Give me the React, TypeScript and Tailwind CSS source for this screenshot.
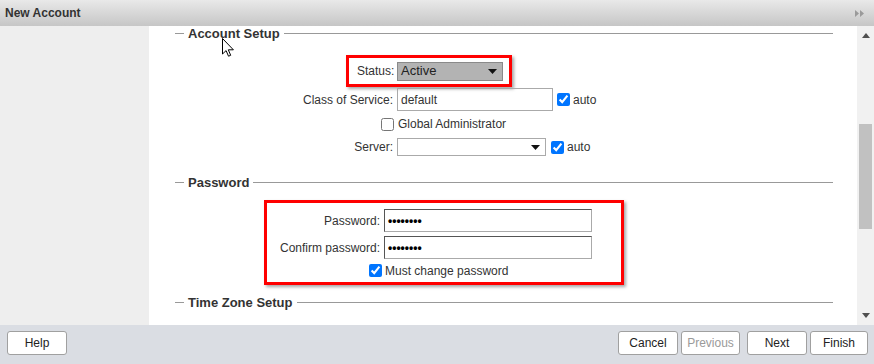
import React from "react";

const font = { fontFamily: '"Liberation Sans", Arial, sans-serif' };

const Legend = ({ title }: { title: string }) => (
  <div className="flex items-center h-[14px] pl-[26px] pr-[24px]">
    <div className="w-[9px] h-px bg-[#999]" />
    <span className="px-[4px] text-[13px] font-bold text-[#333] leading-none">{title}</span>
    <div className="flex-1 h-px bg-[#999]" />
  </div>
);

const Caret = () => (
  <svg width="9" height="5" viewBox="0 0 9 5" className="shrink-0">
    <path d="M0 0h9L4.5 5z" fill="#111" />
  </svg>
);

const Check = ({ checked = false }: { checked?: boolean }) => (
  <input
    type="checkbox"
    defaultChecked={checked}
    className="m-0 w-[13px] h-[13px] accent-[#0075ff] shrink-0"
  />
);

const Btn = ({ label, w, disabled = false }: { label: string; w: string; disabled?: boolean }) => (
  <button
    className={`h-[24px] ${w} bg-white border border-[#a0a0a0] rounded-[3px] text-[12px] ${
      disabled ? "text-[#9a9a9a]" : "text-[#222]"
    }`}
  >
    {label}
  </button>
);

export default function App() {
  return (
    <div style={font} className="w-[874px] h-[364px] flex flex-col overflow-hidden text-[12px] text-[#333]">
      {/* title bar */}
      <div className="h-[26px] flex items-center justify-between pl-[5px] pr-[9px] bg-gradient-to-b from-[#e9e9e9] to-[#c6c6c6]">
        <span className="text-[12px] font-bold text-[#333]">New Account</span>
        <svg width="10" height="7" viewBox="0 0 10 7">
          <path d="M0 0l4 3.5L0 7zM5 0l4 3.5L5 7z" fill="#9a9a9a" />
        </svg>
      </div>

      <div className="flex h-[299px]">
        <div className="w-[149px] bg-[#eeeeee]" />

        <div className="relative w-[708px] bg-white overflow-hidden">
          <Legend title="Account Setup" />

          {/* status */}
          <div className="flex mt-[15px]">
            <div className="w-[197px]" />
            <div className="flex items-center h-[32px] w-[166px] border-[3px] border-[#ff0000] pl-[8px] shadow-[2px_2px_3px_rgba(0,0,0,0.35)]">
              <span className="w-[36px] text-right">Status:</span>
              <div className="ml-[4px] w-[106px] h-[19px] bg-[#b3b3b3] border border-[#8a8a8a] flex items-center justify-between pl-[3px] pr-[5px]">
                <span className="text-[#222] text-[13px]">Active</span>
                <Caret />
              </div>
            </div>
          </div>

          {/* class of service */}
          <div className="flex items-center mt-[1px] h-[23px]">
            <span className="w-[244px] text-right">Class of Service:</span>
            <div className="ml-[4px] w-[156px] h-[23px] border border-[#aaa] flex items-center pl-[3px] text-[#333]">
              default
            </div>
            <div className="ml-[4px] flex items-center gap-[3px]">
              <Check checked />
              <span>auto</span>
            </div>
          </div>

          {/* global admin */}
          <div className="flex items-center mt-[3px] h-[20px]">
            <div className="w-[232px]" />
            <Check />
            <span className="ml-[4px]">Global Administrator</span>
          </div>

          {/* server */}
          <div className="flex items-center mt-[4px] h-[18px]">
            <span className="w-[244px] text-right">Server:</span>
            <div className="ml-[4px] w-[149px] h-[18px] border border-[#aaa] flex items-center justify-end pr-[5px]">
              <Caret />
            </div>
            <div className="ml-[5px] flex items-center gap-[3px]">
              <Check checked />
              <span>auto</span>
            </div>
          </div>

          <div className="mt-[19px]">
            <Legend title="Password" />
          </div>

          {/* password box */}
          <div className="flex mt-[11px]">
            <div className="w-[115px]" />
            <div className="w-[360px] h-[85px] border-[3px] border-[#ff0000] pt-[6px] shadow-[2px_2px_3px_rgba(0,0,0,0.35)]">
              <div className="flex items-center h-[23px]">
                <span className="w-[113px] text-right">Password:</span>
                <div className="ml-[4px] w-[208px] h-[23px] border border-[#aaa] border-t-[#555] border-l-[#555] flex items-center pl-[3px] text-[12px] font-bold text-black">
                  ••••••••
                </div>
              </div>
              <div className="flex items-center h-[23px] mt-[4px]">
                <span className="w-[113px] text-right">Confirm password:</span>
                <div className="ml-[4px] w-[208px] h-[23px] border border-[#aaa] border-t-[#555] border-l-[#555] flex items-center pl-[3px] text-[12px] font-bold text-black">
                  ••••••••
                </div>
              </div>
              <div className="flex items-center h-[19px] mt-[2px] pl-[102px]">
                <Check checked />
                <span className="ml-[3px]">Must change password</span>
              </div>
            </div>
          </div>

          <div className="mt-[10px]">
            <Legend title="Time Zone Setup" />
          </div>

          {/* mouse cursor */}
          <svg width="13" height="20" viewBox="0 0 13 20" className="absolute left-[73px] top-[12px]">
            <path
              d="M0.5 0.5v15.5l3.6-3.4 2.4 5.6 2.2-0.9-2.4-5.5h5.1z"
              fill="#fff"
              stroke="#000"
              strokeWidth="1"
              strokeLinejoin="miter"
            />
          </svg>
        </div>

        {/* scrollbar */}
        <div className="w-[17px] bg-[#f1f1f1] flex flex-col items-center">
          <svg width="8" height="5" viewBox="0 0 8 5" className="mt-[7px]">
            <path d="M4 0l4 5H0z" fill="#505050" />
          </svg>
          <div className="mt-[86px] w-[13px] h-[105px] bg-[#c1c1c1]" />
          <div className="flex-1" />
          <svg width="8" height="5" viewBox="0 0 8 5" className="mb-[7px]">
            <path d="M0 0h8L4 5z" fill="#505050" />
          </svg>
        </div>
      </div>

      {/* footer */}
      <div className="h-[39px] bg-[#dadde3] flex items-start pt-[6px] pl-[7px] pr-[6px]">
        <Btn label="Help" w="w-[60px]" />
        <div className="flex-1" />
        <div className="flex gap-[3px]">
          <Btn label="Cancel" w="w-[60px]" />
          <Btn label="Previous" w="w-[59px]" disabled />
          <div className="w-[1px]" />
          <Btn label="Next" w="w-[60px]" />
          <Btn label="Finish" w="w-[58px]" />
        </div>
      </div>
    </div>
  );
}
